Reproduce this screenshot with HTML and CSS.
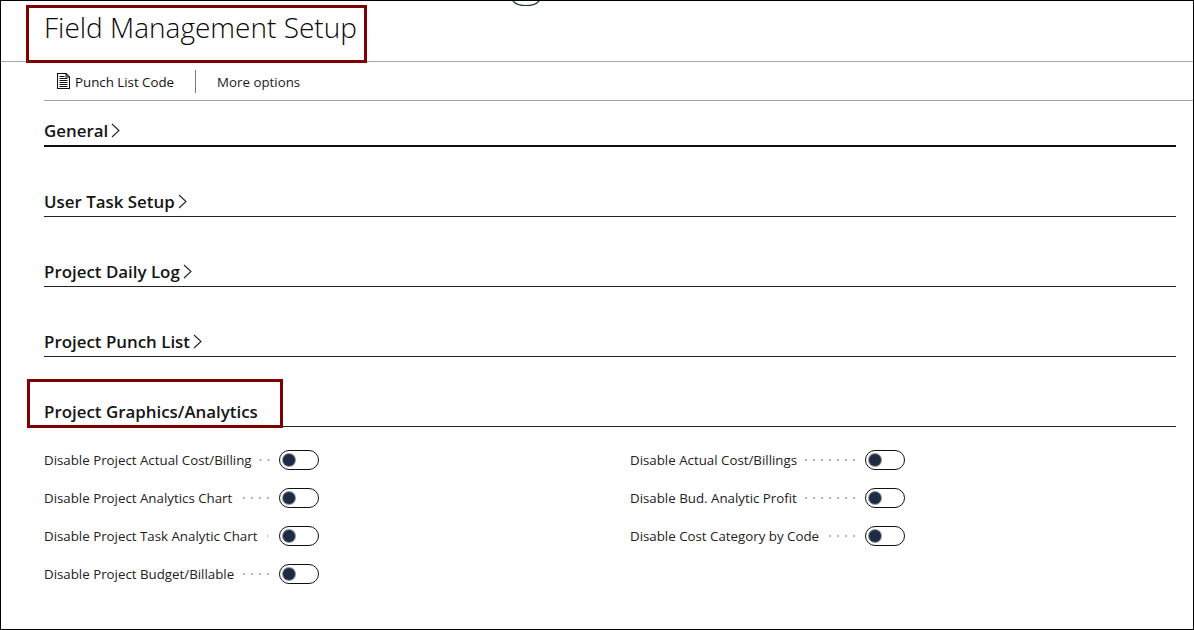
FILE: index.html
```html
<!DOCTYPE html>
<html lang="en">
<head>
<meta charset="utf-8">
<title>Field Management Setup</title>
<link rel="stylesheet" href="styles.css">
</head>
<body>
<div class="frame">
  <svg class="top-arc" width="32" height="6" viewBox="0 0 32 6"><path d="M3 0C8 6 24 6 29 0" fill="none" stroke="#16383c" stroke-width="1.2"/></svg>
  <header class="title-bar"><h1>Field Management Setup</h1></header>
  <nav class="action-bar">
    <a class="action primary">
      <svg class="doc-icon" width="13" height="16" viewBox="0 0 13 16" fill="none" stroke="#111" stroke-width="1.1"><path d="M.5.500H9L12.500 4V15.500H.5Z"/><path d="M9 .5V4H12.500"/><path d="M2.500 3.500H7.500M2.500 5.500H10.500M2.500 7.500H10.500M2.500 9.500H10.500M2.500 11.500H10.500M2.500 13.500H10.500"/></svg>
      <span>Punch List Code</span>
    </a>
    <span class="divider"></span>
    <a class="action">More options</a>
  </nav>
  <main class="content">
    <section class="group"><h2 class="heading thick">General<svg class="chev" width="9" height="15" viewBox="0 0 9 15"><path d="M1 1L8 7.500L1 14" fill="none" stroke="#222" stroke-width="1.1"/></svg></h2></section>
    <section class="group"><h2 class="heading">User Task Setup<svg class="chev" width="9" height="15" viewBox="0 0 9 15"><path d="M1 1L8 7.500L1 14" fill="none" stroke="#222" stroke-width="1.1"/></svg></h2></section>
    <section class="group"><h2 class="heading">Project Daily Log<svg class="chev" width="9" height="15" viewBox="0 0 9 15"><path d="M1 1L8 7.500L1 14" fill="none" stroke="#222" stroke-width="1.1"/></svg></h2></section>
    <section class="group"><h2 class="heading">Project Punch List<svg class="chev" width="9" height="15" viewBox="0 0 9 15"><path d="M1 1L8 7.500L1 14" fill="none" stroke="#222" stroke-width="1.1"/></svg></h2></section>
    <section class="group"><h2 class="heading">Project Graphics/Analytics</h2>
      <div class="fields">
        <div class="field"><span class="label">Disable Project Actual Cost/Billing</span><span class="leader"></span><span class="toggle"></span></div>
        <div class="field"><span class="label">Disable Actual Cost/Billings</span><span class="leader"></span><span class="toggle"></span></div>
        <div class="field"><span class="label">Disable Project Analytics Chart</span><span class="leader"></span><span class="toggle"></span></div>
        <div class="field"><span class="label">Disable Bud. Analytic Profit</span><span class="leader"></span><span class="toggle"></span></div>
        <div class="field"><span class="label">Disable Project Task Analytic Chart</span><span class="leader"></span><span class="toggle"></span></div>
        <div class="field"><span class="label">Disable Cost Category by Code</span><span class="leader"></span><span class="toggle"></span></div>
        <div class="field"><span class="label">Disable Project Budget/Billable</span><span class="leader"></span><span class="toggle"></span></div>
      </div>
    </section>
  </main>
  <div class="callout callout-title"></div>
  <div class="callout callout-section"></div>
</div>
</body>
</html>
```
FILE: styles.css
```css
* { box-sizing: border-box; }
html, body { margin: 0; padding: 0; background: #fff; }
body { font-family: "Open Sans", "Noto Sans", sans-serif; color: #1c1c1c; }
.frame { position: relative; width: 1194px; height: 630px; border: 1px solid #000; overflow: hidden; background: #fff; }
.top-arc { position: absolute; left: 509px; top: 0; }
.title-bar { height: 61px; padding-left: 43px; border-bottom: 1px solid #a6a6a6; }
h1 { margin: 0; padding-top: 7px; font-size: 28px; line-height: 38px; font-weight: 300; color: #0a0a0a; white-space: nowrap; }
.action-bar { display: flex; align-items: center; height: 39px; margin-left: 43px; border-bottom: 1px solid #a6a6a6; padding-left: 13px; padding-top: 1px; }
.action { display: flex; align-items: center; gap: 5px; font-size: 13.300px; color: #222; white-space: nowrap; }
.action.primary { color: #111; }
.doc-icon { margin-top: -2px; }
.divider { width: 1px; height: 23px; background: #777; margin: 0 21px; }
.content { padding: 0 17px 0 43px; }
.group { height: 70px; display: flex; flex-direction: column; justify-content: flex-end; }
.group:first-child { height: 46px; }
.group:last-child { height: auto; }
.heading { display: flex; align-items: center; gap: 3px; margin: 0; height: 30px; padding-bottom: 1px; border-bottom: 1px solid #222; font-size: 16.900px; font-weight: 600; color: #151515; white-space: nowrap; }
.heading.thick { border-bottom: 2px solid #111; }
.group:last-child .heading { margin-top: 40px; }
.fields { display: grid; grid-template-columns: 586px 546px; grid-auto-rows: 38px; padding-top: 14px; }
.field { display: flex; align-items: center; width: 275px; height: 38px; }
.label { font-size: 13.300px; color: #222; white-space: nowrap; }
.leader { flex: 1; height: 2px; margin: 0 7px; background-image: radial-gradient(circle, #b0b0b0 1px, transparent 1px); background-size: 8px 2px; background-position: right center; background-repeat: repeat-x; }
.toggle { position: relative; flex: none; width: 40px; height: 20px; border: 1.300px solid #111; border-radius: 10px; background: #fff; }
.toggle::after { content: ""; position: absolute; left: 3px; top: 2.700px; width: 12px; height: 12px; border-radius: 50%; background: #1f2b40; box-shadow: 0 0 0 1px #8a93a0; }
.callout { position: absolute; border: 3px solid #7f0000; pointer-events: none; }
.callout-title { left: 25px; top: 4px; width: 341px; height: 58px; }
.callout-section { left: 26px; top: 378px; width: 256px; height: 49px; }
```
